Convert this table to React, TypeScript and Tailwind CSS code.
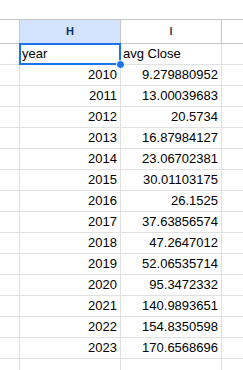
const rows = [
  ['2010', '9.279880952'],
  ['2011', '13.00039683'],
  ['2012', '20.5734'],
  ['2013', '16.87984127'],
  ['2014', '23.06702381'],
  ['2015', '30.01103175'],
  ['2016', '26.1525'],
  ['2017', '37.63856574'],
  ['2018', '47.2647012'],
  ['2019', '52.06535714'],
  ['2020', '95.3472332'],
  ['2021', '140.9893651'],
  ['2022', '154.8350598'],
  ['2023', '170.6568696'],
]

const App = () => {
  return (
    <div className="w-[243px] h-[370px] overflow-hidden bg-white font-['Liberation_Sans',Arial,sans-serif] text-[13px] text-black">
      {/* Formula bar gap */}
      <div className="h-[19px]" />

      {/* Column headers */}
      <div className="flex h-[25px] border-y border-[#c4c7c5] text-[11px]">
        <div className="w-[20px] shrink-0 border-r border-[#c4c7c5]" />
        <div className="w-[101px] shrink-0 border-r border-[#c4c7c5] bg-[#d3e3fd] flex items-center justify-center font-bold text-[#0a2f6e]">
          H
        </div>
        <div className="w-[101px] shrink-0 border-r border-[#c4c7c5] flex items-center justify-center font-bold text-[#444746]">
          I
        </div>
        <div className="flex-1" />
      </div>

      {/* Header row */}
      <div className="flex h-[21px] border-b border-[#e1e1e1]">
        <div className="w-[20px] shrink-0 border-r border-[#e1e1e1]" />
        <div className="relative w-[101px] shrink-0 border-r border-[#e1e1e1] flex items-end pb-[1px] pl-[2px]">
          year
          <div className="absolute -left-[1px] -top-[1px] -right-[1px] -bottom-[1px] border-2 border-[#1a73e8]" />
          <div className="absolute -right-[5px] -bottom-[5px] w-[9px] h-[9px] rounded-full bg-[#1a73e8] border border-white" />
        </div>
        <div className="w-[101px] shrink-0 border-r border-[#e1e1e1] flex items-end pb-[1px] pl-[2px]">
          avg Close
        </div>
        <div className="flex-1" />
      </div>

      {/* Data rows */}
      {rows.map(([year, close]) => (
        <div key={year} className="flex h-[21px] border-b border-[#e1e1e1]">
          <div className="w-[20px] shrink-0 border-r border-[#e1e1e1]" />
          <div className="w-[101px] shrink-0 border-r border-[#e1e1e1] flex items-end justify-end pb-[1px] pr-[3px]">
            {year}
          </div>
          <div className="w-[101px] shrink-0 border-r border-[#e1e1e1] flex items-end justify-end pb-[1px] pr-[3px]">
            {close}
          </div>
          <div className="flex-1" />
        </div>
      ))}

      {/* Empty row */}
      <div className="flex h-[21px] border-b border-[#e1e1e1]">
        <div className="w-[20px] shrink-0 border-r border-[#e1e1e1]" />
        <div className="w-[101px] shrink-0 border-r border-[#e1e1e1]" />
        <div className="w-[101px] shrink-0 border-r border-[#e1e1e1]" />
        <div className="flex-1" />
      </div>
    </div>
  )
}

export default App
